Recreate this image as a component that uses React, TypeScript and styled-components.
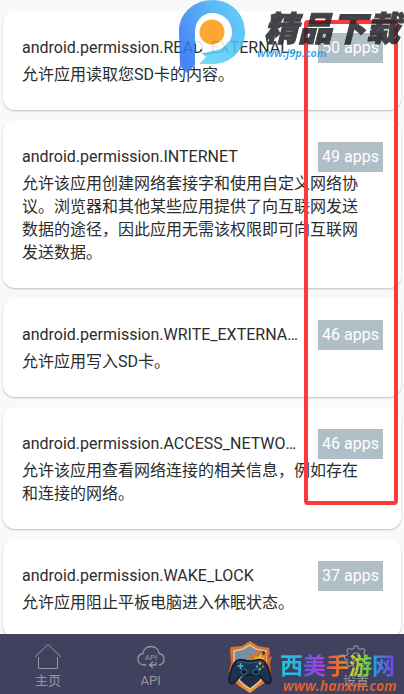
import React from "react";
import styled, { createGlobalStyle } from "styled-components";

const GlobalStyle = createGlobalStyle`
  * { box-sizing: border-box; }
  body {
    margin: 0;
    background: #f9f9fa;
    font-family: Roboto, "Noto Sans CJK SC", sans-serif;
    color: #2c2c2c;
  }
`;

const Screen = styled.div`
  position: relative;
  display: flex;
  flex-direction: column;
  height: 100vh;
  overflow: hidden;
`;

const List = styled.main`
  flex: 1;
  min-height: 0;
  overflow: hidden;
  display: flex;
  flex-direction: column;
  gap: 10px;
  padding: 11px 3px 0;
`;

const Card = styled.article`
  flex: none;
  padding: 22px 18px 24px 19px;
  border-radius: 12px;
  background: #fff;
  box-shadow: 0 1px 2px rgba(0, 0, 0, 0.24);
`;

const CardHead = styled.header`
  display: flex;
  align-items: center;
  justify-content: space-between;
  gap: 18px;
  height: 30px;
`;

const Name = styled.h2`
  margin: 0;
  min-width: 0;
  overflow: hidden;
  white-space: nowrap;
  text-overflow: ellipsis;
  font-size: 16px;
  font-weight: 400;
  line-height: 30px;
`;

const Count = styled.span`
  flex: none;
  padding: 0 4px;
  background: #b0bec5;
  color: #fff;
  font-size: 16px;
  line-height: 30px;
`;

const Description = styled.p`
  margin: 0;
  padding-right: 24px;
  color: #2c2c2c;
  font-size: 16px;
  font-weight: 400;
  line-height: 23px;
`;

const TabBar = styled.nav`
  flex: none;
  display: flex;
  justify-content: space-between;
  height: 60px;
  padding: 8px 8px 0;
  background: #40415f;
`;

const Tab = styled.button`
  display: flex;
  flex-direction: column;
  align-items: center;
  width: 80px;
  padding: 0;
  border: 0;
  background: none;
  color: #96979f;
  font: 400 13px/20px Roboto, "Noto Sans CJK SC", sans-serif;
`;

const Highlight = styled.div`
  position: absolute;
  top: 20px;
  right: 6px;
  width: 94px;
  height: 485px;
  border: 4px solid #fb3a3e;
  border-radius: 4px;
`;

const TopMark = styled.div`
  position: absolute;
  top: 0;
  right: 4px;
  display: flex;
  gap: 10px;
  opacity: 0.87;
`;

const BottomMark = styled.div`
  position: absolute;
  right: 7px;
  bottom: 0;
  display: flex;
  align-items: flex-end;
  gap: 8px;
  opacity: 0.88;
`;

const MarkText = styled.div`
  display: flex;
  flex-direction: column;
`;

const TopTitle = styled.strong`
  margin: 8px 0 0 7px;
  color: #26282c;
  font: italic 900 34px/38px "Noto Sans CJK SC", sans-serif;
  -webkit-text-stroke: 1px #26282c;
`;

const TopUrl = styled.span`
  color: #2b9dec;
  font: italic 700 11px/14px "Open Sans", sans-serif;
`;

const BottomTitle = styled.strong`
  font: 700 23px/28px "Noto Sans CJK SC", sans-serif;
`;

const Glyph = styled.span<{ $from: string; $to: string }>`
  background: linear-gradient(90deg, ${(p) => p.$from}, ${(p) => p.$to});
  background-clip: text;
  color: transparent;
`;

const BottomUrl = styled.span`
  padding-left: 3px;
  color: #f2662b;
  font: italic 700 14px/16px "Open Sans", sans-serif;
`;

const permissions = [
  { name: "android.permission.READ_EXTERNAL_STORAGE", count: 50, text: "允许应用读取您SD卡的内容。" },
  {
    name: "android.permission.INTERNET",
    count: 49,
    text: "允许该应用创建网络套接字和使用自定义网络协议。浏览器和其他某些应用提供了向互联网发送数据的途径，因此应用无需该权限即可向互联网发送数据。",
  },
  { name: "android.permission.WRITE_EXTERNAL_STORAGE", count: 46, text: "允许应用写入SD卡。" },
  {
    name: "android.permission.ACCESS_NETWORK_STATE",
    count: 46,
    text: "允许该应用查看网络连接的相关信息，例如存在和连接的网络。",
  },
  { name: "android.permission.WAKE_LOCK", count: 37, text: "允许应用阻止平板电脑进入休眠状态。" },
];

const titleGlyphs = [
  ["西", "#18e0f2", "#2ab8ff"],
  ["美", "#6a5cff", "#c63cf0"],
  ["手", "#ff4f4a", "#ff9a1c"],
  ["游", "#f4e01c", "#3fe04a"],
  ["网", "#22b8f0", "#7a3cff"],
];

const HomeIcon = () => (
  <svg width="28" height="29" viewBox="0 0 28 29" fill="none" stroke="currentColor" strokeWidth="1">
    <path d="M1 15 14 2.500 27 15M4.500 15v11.500h19V15" />
  </svg>
);

const CloudIcon = () => (
  <svg width="28" height="29" viewBox="0 0 28 29" fill="none" stroke="currentColor" strokeWidth="1.300">
    <path d="M9 23H7.500C3.500 23 1 20.500 1 17.200c0-3 2-5.200 5-5.700C6.500 7 10 4.500 14 4.500s7.500 2.500 8 7c3 .5 5 2.700 5 5.700 0 3-2 5.300-5 5.800M19 20v3h-6.500M16 19.800 12.500 23l3.500 3" />
    <text x="14" y="18" textAnchor="middle" fontSize="8" fill="currentColor" stroke="none">API</text>
  </svg>
);

const GearIcon = () => (
  <svg width="28" height="29" viewBox="0 0 28 29" fill="none" stroke="currentColor" strokeWidth="1.200">
    <path d="M12 3h4l.8 3 2.700 1.200 2.700-1.700 2.800 2.900-1.700 2.700 1.200 2.600 3 .8v4l-3 .8-1.200 2.700 1.700 2.600-2.800 2.900-2.700-1.600-2.700 1.100-.8 3h-4l-.8-3-2.700-1.100-2.700 1.600L3 24.600l1.700-2.600-1.200-2.700-3-.8v-4l3-.8 1.200-2.600L3 8.400l2.800-2.900 2.700 1.700L11.200 6z" transform="translate(2.200 1.500) scale(.84)" />
    <circle cx="14" cy="15" r="4" />
  </svg>
);

const PMark = () => (
  <svg width="68" height="74" viewBox="0 0 68 74">
    <defs>
      <linearGradient id="pBlue" x1="0.900" y1="0.300" x2="0.100" y2="0.800">
        <stop offset="0" stopColor="#4cc0f8" />
        <stop offset="1" stopColor="#2f74f2" />
      </linearGradient>
      <linearGradient id="pTail" x1="1" y1="0" x2="0" y2="1">
        <stop offset="0" stopColor="#45baf8" />
        <stop offset="1" stopColor="#5fd8f6" />
      </linearGradient>
    </defs>
    <circle cx="33" cy="32" r="20" fill="#fff" />
    <path fill="url(#pBlue)" d="M0 31C0 13 15 0 34 0c18 0 32 14 32 32H53c0-11-9-19-20-19-10 0-17 8-17 20v32l-8 8-7-7z" />
    <path fill="url(#pTail)" d="M66 32c0 18-14 32-32 32H20l7-7-5-4c4 0 7-1 11-2 11-1 20-8 20-19z" />
    <circle cx="33" cy="32" r="12.500" fill="#fb9c14" />
  </svg>
);

const ShieldMark = () => (
  <svg width="44" height="54" viewBox="0 0 44 54">
    <defs>
      <linearGradient id="fire" x1="0" y1="0" x2="0" y2="1">
        <stop offset="0" stopColor="#f08a35" />
        <stop offset="0.600" stopColor="#e4561c" />
        <stop offset="1" stopColor="#ffb23a" />
      </linearGradient>
      <linearGradient id="steel" x1="0" y1="0" x2="1" y2="1">
        <stop offset="0.480" stopColor="#8298ad" />
        <stop offset="0.500" stopColor="#1d2b42" />
      </linearGradient>
    </defs>
    <path fill="url(#fire)" d="M22 1 30 6l11 2 1 6-2 4 4-2-2 8 1 8-2 9-8 4-11 8-11-7-8-7L1 31l2-8-1-13 1-3 11-1z" />
    <path fill="url(#steel)" stroke="#ffd79a" strokeWidth="1.500" d="m22 5 6 4 10 2v20c-2 8-9 13-16 18C14 44 8 39 6 31V11l9-2z" />
    <path fill="#f67a1d" d="m20 20 3-6 2 2 4-7 1 6 4-5 1 5 4-3-2 12z" />
    <path fill="#ffc63d" d="m25 21 3-5 1 2 4-5 1 5 3-2-2 5z" />
    <path fill="#16334d" stroke="#0a1424" strokeWidth="1.500" d="M10 20c4-2 6 1 12 1s8-3 12-1c5 2 8 12 9 20 0 4-4 5-7 1l-5-6H13l-5 6c-3 4-7 3-7-1 1-8 4-18 9-20z" />
    <path fill="none" stroke="#2d6c8c" d="M8 23c4-3 8 0 14 0s10-3 14 0" />
    <path stroke="#55b9e4" strokeWidth="1.600" d="M9.500 26h6M12.500 23v6" />
    <circle cx="16" cy="32" r="3" fill="#0b1b2c" stroke="#347b9c" />
    <circle cx="28" cy="32" r="3" fill="#0b1b2c" stroke="#347b9c" />
    <circle cx="32" cy="23.500" r="1.300" fill="#ffc83d" />
    <circle cx="29" cy="26.500" r="1.300" fill="#35a9f0" />
    <circle cx="35" cy="26.500" r="1.300" fill="#f04a3c" />
    <circle cx="32" cy="29" r="1.300" fill="#63d44a" />
  </svg>
);

export default function App() {
  return (
    <>
      <GlobalStyle />
      <Screen>
        <List>
          {permissions.map((p) => (
            <Card key={p.name}>
              <CardHead>
                <Name>{p.name}</Name>
                <Count>{p.count} apps</Count>
              </CardHead>
              <Description>{p.text}</Description>
            </Card>
          ))}
        </List>
        <TabBar>
          <Tab><HomeIcon />主页</Tab>
          <Tab><CloudIcon />API</Tab>
          <Tab />
          <Tab><GearIcon />设置</Tab>
        </TabBar>
        <Highlight />
        <TopMark>
          <PMark />
          <MarkText>
            <TopTitle>精品下载</TopTitle>
            <TopUrl>www.j9p.com</TopUrl>
          </MarkText>
        </TopMark>
        <BottomMark>
          <ShieldMark />
          <MarkText>
            <BottomTitle>
              {titleGlyphs.map(([ch, from, to]) => (
                <Glyph key={ch} $from={from} $to={to}>{ch}</Glyph>
              ))}
            </BottomTitle>
            <BottomUrl>www.hanxm.com</BottomUrl>
          </MarkText>
        </BottomMark>
      </Screen>
    </>
  );
}
